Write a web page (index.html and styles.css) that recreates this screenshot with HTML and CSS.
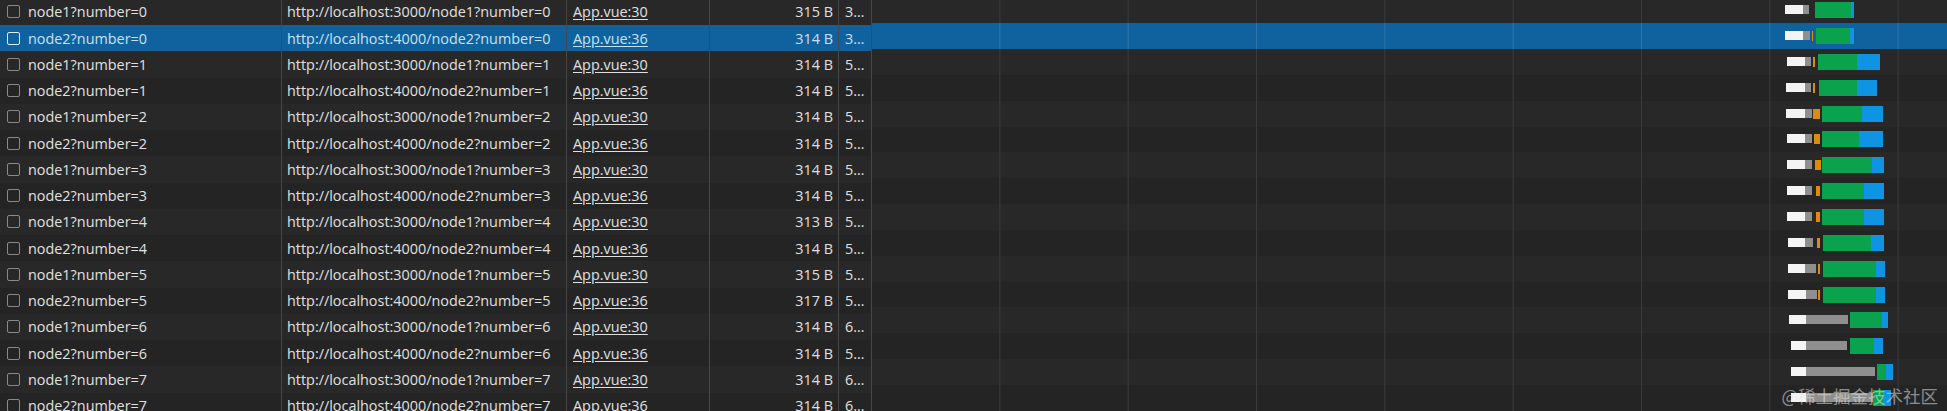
FILE: index.html
```html
<!DOCTYPE html>
<html>
  <head>
    <title>Network</title>
    <link rel="stylesheet" href="styles.css">
  </head>
  <body>
    <div class="panel">
      <div class="table">
        <div class="row">
          <div class="cell name"><span class="check"></span>node1?number=0</div>
          <div class="cell url">http://localhost:3000/node1?number=0</div>
          <div class="cell init"><span class="link">App.vue:30</span></div>
          <div class="cell size">315 B</div>
          <div class="cell time">3…</div>
        </div>
        <div class="row selected">
          <div class="cell name"><span class="check"></span>node2?number=0</div>
          <div class="cell url">http://localhost:4000/node2?number=0</div>
          <div class="cell init"><span class="link">App.vue:36</span></div>
          <div class="cell size">314 B</div>
          <div class="cell time">3…</div>
        </div>
        <div class="row">
          <div class="cell name"><span class="check"></span>node1?number=1</div>
          <div class="cell url">http://localhost:3000/node1?number=1</div>
          <div class="cell init"><span class="link">App.vue:30</span></div>
          <div class="cell size">314 B</div>
          <div class="cell time">5…</div>
        </div>
        <div class="row">
          <div class="cell name"><span class="check"></span>node2?number=1</div>
          <div class="cell url">http://localhost:4000/node2?number=1</div>
          <div class="cell init"><span class="link">App.vue:36</span></div>
          <div class="cell size">314 B</div>
          <div class="cell time">5…</div>
        </div>
        <div class="row">
          <div class="cell name"><span class="check"></span>node1?number=2</div>
          <div class="cell url">http://localhost:3000/node1?number=2</div>
          <div class="cell init"><span class="link">App.vue:30</span></div>
          <div class="cell size">314 B</div>
          <div class="cell time">5…</div>
        </div>
        <div class="row">
          <div class="cell name"><span class="check"></span>node2?number=2</div>
          <div class="cell url">http://localhost:4000/node2?number=2</div>
          <div class="cell init"><span class="link">App.vue:36</span></div>
          <div class="cell size">314 B</div>
          <div class="cell time">5…</div>
        </div>
        <div class="row">
          <div class="cell name"><span class="check"></span>node1?number=3</div>
          <div class="cell url">http://localhost:3000/node1?number=3</div>
          <div class="cell init"><span class="link">App.vue:30</span></div>
          <div class="cell size">314 B</div>
          <div class="cell time">5…</div>
        </div>
        <div class="row">
          <div class="cell name"><span class="check"></span>node2?number=3</div>
          <div class="cell url">http://localhost:4000/node2?number=3</div>
          <div class="cell init"><span class="link">App.vue:36</span></div>
          <div class="cell size">314 B</div>
          <div class="cell time">5…</div>
        </div>
        <div class="row">
          <div class="cell name"><span class="check"></span>node1?number=4</div>
          <div class="cell url">http://localhost:3000/node1?number=4</div>
          <div class="cell init"><span class="link">App.vue:30</span></div>
          <div class="cell size">313 B</div>
          <div class="cell time">5…</div>
        </div>
        <div class="row">
          <div class="cell name"><span class="check"></span>node2?number=4</div>
          <div class="cell url">http://localhost:4000/node2?number=4</div>
          <div class="cell init"><span class="link">App.vue:36</span></div>
          <div class="cell size">314 B</div>
          <div class="cell time">5…</div>
        </div>
        <div class="row">
          <div class="cell name"><span class="check"></span>node1?number=5</div>
          <div class="cell url">http://localhost:3000/node1?number=5</div>
          <div class="cell init"><span class="link">App.vue:30</span></div>
          <div class="cell size">315 B</div>
          <div class="cell time">5…</div>
        </div>
        <div class="row">
          <div class="cell name"><span class="check"></span>node2?number=5</div>
          <div class="cell url">http://localhost:4000/node2?number=5</div>
          <div class="cell init"><span class="link">App.vue:36</span></div>
          <div class="cell size">317 B</div>
          <div class="cell time">5…</div>
        </div>
        <div class="row">
          <div class="cell name"><span class="check"></span>node1?number=6</div>
          <div class="cell url">http://localhost:3000/node1?number=6</div>
          <div class="cell init"><span class="link">App.vue:30</span></div>
          <div class="cell size">314 B</div>
          <div class="cell time">6…</div>
        </div>
        <div class="row">
          <div class="cell name"><span class="check"></span>node2?number=6</div>
          <div class="cell url">http://localhost:4000/node2?number=6</div>
          <div class="cell init"><span class="link">App.vue:36</span></div>
          <div class="cell size">314 B</div>
          <div class="cell time">5…</div>
        </div>
        <div class="row">
          <div class="cell name"><span class="check"></span>node1?number=7</div>
          <div class="cell url">http://localhost:3000/node1?number=7</div>
          <div class="cell init"><span class="link">App.vue:30</span></div>
          <div class="cell size">314 B</div>
          <div class="cell time">6…</div>
        </div>
        <div class="row">
          <div class="cell name"><span class="check"></span>node2?number=7</div>
          <div class="cell url">http://localhost:4000/node2?number=7</div>
          <div class="cell init"><span class="link">App.vue:36</span></div>
          <div class="cell size">314 B</div>
          <div class="cell time">6…</div>
        </div>
      </div>

      <!-- waterfall: bar offsets are timings, so they are set per bar -->
      <div class="waterfall">
        <div class="wf-row">
          <span class="seg wait" style="left:913px;width:18px"></span>
          <span class="seg queue" style="left:931px;width:6px"></span>
          <span class="seg ttfb" style="left:943px;width:36px"></span>
          <span class="seg load" style="left:979px;width:3px"></span>
        </div>
        <div class="wf-row selected">
          <span class="seg wait" style="left:913px;width:18px"></span>
          <span class="seg queue" style="left:931px;width:7px"></span>
          <span class="seg conn" style="left:940px;width:1px"></span>
          <span class="seg ttfb" style="left:944px;width:34px"></span>
          <span class="seg load" style="left:978px;width:4px"></span>
        </div>
        <div class="wf-row">
          <span class="seg wait" style="left:915px;width:18px"></span>
          <span class="seg queue" style="left:933px;width:6px"></span>
          <span class="seg conn" style="left:941px;width:2px"></span>
          <span class="seg ttfb" style="left:946px;width:39px"></span>
          <span class="seg load" style="left:985px;width:23px"></span>
        </div>
        <div class="wf-row">
          <span class="seg wait" style="left:914px;width:19px"></span>
          <span class="seg queue" style="left:933px;width:6px"></span>
          <span class="seg conn" style="left:941px;width:2px"></span>
          <span class="seg ttfb" style="left:947px;width:38px"></span>
          <span class="seg load" style="left:985px;width:20px"></span>
        </div>
        <div class="wf-row">
          <span class="seg wait" style="left:914px;width:19px"></span>
          <span class="seg queue" style="left:933px;width:7px"></span>
          <span class="seg conn" style="left:941px;width:7px"></span>
          <span class="seg ttfb" style="left:950px;width:40px"></span>
          <span class="seg load" style="left:990px;width:21px"></span>
        </div>
        <div class="wf-row">
          <span class="seg wait" style="left:915px;width:18px"></span>
          <span class="seg queue" style="left:933px;width:7px"></span>
          <span class="seg conn" style="left:942px;width:6px"></span>
          <span class="seg ttfb" style="left:950px;width:37px"></span>
          <span class="seg load" style="left:987px;width:24px"></span>
        </div>
        <div class="wf-row">
          <span class="seg wait" style="left:915px;width:18px"></span>
          <span class="seg queue" style="left:933px;width:7px"></span>
          <span class="seg conn" style="left:943px;width:6px"></span>
          <span class="seg ttfb" style="left:950px;width:50px"></span>
          <span class="seg load" style="left:1000px;width:12px"></span>
        </div>
        <div class="wf-row">
          <span class="seg wait" style="left:915px;width:18px"></span>
          <span class="seg queue" style="left:933px;width:7px"></span>
          <span class="seg conn" style="left:944px;width:4px"></span>
          <span class="seg ttfb" style="left:950px;width:42px"></span>
          <span class="seg load" style="left:992px;width:20px"></span>
        </div>
        <div class="wf-row">
          <span class="seg wait" style="left:915px;width:18px"></span>
          <span class="seg queue" style="left:933px;width:7px"></span>
          <span class="seg conn" style="left:944px;width:4px"></span>
          <span class="seg ttfb" style="left:950px;width:42px"></span>
          <span class="seg load" style="left:992px;width:20px"></span>
        </div>
        <div class="wf-row">
          <span class="seg wait" style="left:916px;width:17px"></span>
          <span class="seg queue" style="left:933px;width:8px"></span>
          <span class="seg conn" style="left:945px;width:3px"></span>
          <span class="seg ttfb" style="left:951px;width:48px"></span>
          <span class="seg load" style="left:999px;width:13px"></span>
        </div>
        <div class="wf-row">
          <span class="seg wait" style="left:916px;width:17px"></span>
          <span class="seg queue" style="left:933px;width:11px"></span>
          <span class="seg conn" style="left:946px;width:2px"></span>
          <span class="seg ttfb" style="left:951px;width:53px"></span>
          <span class="seg load" style="left:1004px;width:9px"></span>
        </div>
        <div class="wf-row">
          <span class="seg wait" style="left:916px;width:18px"></span>
          <span class="seg queue" style="left:934px;width:11px"></span>
          <span class="seg conn" style="left:946px;width:2px"></span>
          <span class="seg ttfb" style="left:951px;width:53px"></span>
          <span class="seg load" style="left:1004px;width:9px"></span>
        </div>
        <div class="wf-row">
          <span class="seg wait" style="left:917px;width:17px"></span>
          <span class="seg queue" style="left:934px;width:42px"></span>
          <span class="seg ttfb" style="left:978px;width:32px"></span>
          <span class="seg load" style="left:1010px;width:6px"></span>
        </div>
        <div class="wf-row">
          <span class="seg wait" style="left:919px;width:15px"></span>
          <span class="seg queue" style="left:934px;width:41px"></span>
          <span class="seg ttfb" style="left:978px;width:24px"></span>
          <span class="seg load" style="left:1002px;width:9px"></span>
        </div>
        <div class="wf-row">
          <span class="seg wait" style="left:919px;width:15px"></span>
          <span class="seg queue" style="left:934px;width:69px"></span>
          <span class="seg ttfb" style="left:1005px;width:9px"></span>
          <span class="seg load" style="left:1014px;width:7px"></span>
        </div>
        <div class="wf-row">
          <span class="seg wait" style="left:919px;width:15px"></span>
          <span class="seg queue" style="left:934px;width:67px"></span>
          <span class="seg ttfb" style="left:1001px;width:10px"></span>
          <span class="seg load" style="left:1011px;width:8px"></span>
        </div>
      </div>
    </div>
    <div class="watermark">@稀土掘金技术社区</div>
  </body>
</html>
```

FILE: styles.css
```css
body {
  margin: 0;
  background-color: #242424;
  color: #e0e0e0;
  font-family: "Open Sans", "Noto Sans", sans-serif;
  font-size: 14.4px;
  overflow: hidden;
  height: 411px;
}
.panel {
  display: flex;
  align-items: flex-start;
}
.table {
  width: 872px;
  flex: none;
  margin-top: -1.25px;
}
.row {
  display: flex;
  height: 26.25px;
  background-color: #282828;
}
.row:nth-child(even) {
  background-color: #242424;
}
.row.selected {
  background-color: #10629e;
  color: #c9e0f3;
}
.cell {
  box-sizing: border-box;
  display: flex;
  align-items: center;
  white-space: nowrap;
  overflow: hidden;
  border-right: 1px solid #474747;
  padding: 0 5px;
}
.name {
  width: 282px;
  padding-left: 7px;
}
.url {
  width: 285px;
}
.init {
  width: 143px;
  padding-left: 6px;
}
.size {
  width: 129px;
  justify-content: flex-end;
}
.time {
  width: 33px;
  padding-left: 6px;
}
.link {
  text-decoration: underline;
  text-underline-offset: 2px;
}
.check {
  box-sizing: border-box;
  width: 13px;
  height: 13px;
  border: 1.5px solid #8a8a8a;
  border-radius: 2px;
  margin-right: 8px;
  flex: none;
}
.selected .check {
  border-color: #d6ecff;
}
.waterfall {
  flex: 1;
  min-width: 0;
  margin-top: -2.7px;
}
.wf-row {
  position: relative;
  height: 25.85px;
  background-color: #282828;
  background-image: linear-gradient(to right, transparent 127.3px, #3a3a3a 127.3px, #3a3a3a 128.3px, transparent 128.3px);
  background-size: 128.33px 100%;
}
.wf-row:nth-child(even) {
  background-color: #242424;
}
.wf-row.selected {
  background-color: #10629e;
  background-image: linear-gradient(to right, transparent 127.3px, #2e73a8 127.3px, #2e73a8 128.3px, transparent 128.3px);
}
.seg {
  position: absolute;
  top: 50%;
  box-sizing: border-box;
}
.wait {
  height: 9px;
  margin-top: -5px;
  background-color: #f4f4f4;
}
.queue {
  height: 9px;
  margin-top: -5px;
  background-color: #8f8f8f;
}
.conn {
  height: 10px;
  margin-top: -5px;
  background-color: #e08a0c;
}
.ttfb {
  height: 16px;
  margin-top: -8px;
  background-color: #0ba24e;
}
.load {
  height: 16px;
  margin-top: -8px;
  background-color: #0f93e3;
}
.watermark {
  position: absolute;
  right: 9px;
  bottom: 3px;
  font-family: "Noto Sans CJK SC", sans-serif;
  font-size: 17.5px;
  color: rgba(230, 230, 230, 0.55);
}
```
